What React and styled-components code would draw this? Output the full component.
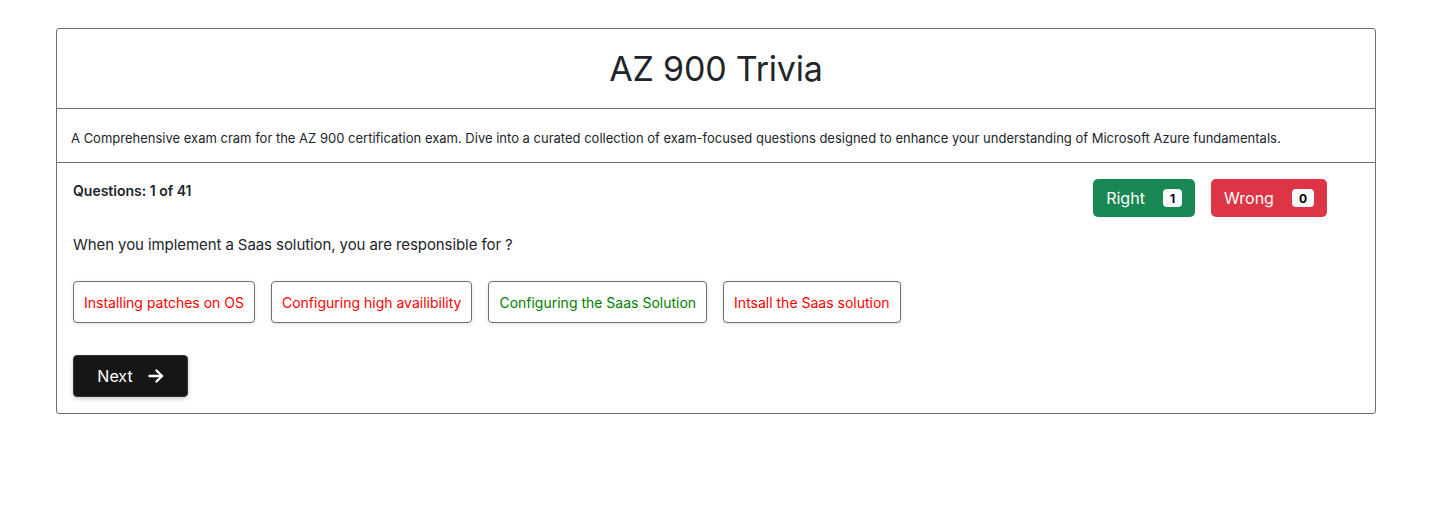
import React from "react";
import styled, { createGlobalStyle } from "styled-components";

const Global = createGlobalStyle`
  html, body { margin: 0; padding: 0; background: #fff; }
  body { font-family: Inter, "Noto Sans", sans-serif; color: #212529; }
  * { box-sizing: border-box; }
`;

const Page = styled.div`
  padding: 28px 58px 0 56px;
`;

const Card = styled.div`
  border: 1px solid #6f6f6f;
  border-radius: 3px;
`;

const Header = styled.div`
  height: 80px;
  display: flex;
  align-items: center;
  justify-content: center;
  border-bottom: 1px solid #6f6f6f;
`;

const Title = styled.h1`
  margin: 0;
  font-size: 34px;
  font-weight: 400;
  color: #212529;
  letter-spacing: -0.2px;
`;

const Description = styled.div`
  height: 54px;
  display: flex;
  align-items: center;
  padding: 4px 14px 0;
  font-size: 13px;
  color: #212529;
  border-bottom: 1px solid #6f6f6f;
`;

const Body = styled.div`
  padding: 16px 16px 16px;
`;

const TopRow = styled.div`
  display: flex;
  justify-content: space-between;
  align-items: flex-start;
  padding-right: 32px;
`;

const Counter = styled.div`
  font-size: 14px;
  font-weight: 600;
  margin-top: 3px;
`;

const Scores = styled.div`
  display: flex;
  gap: 16px;
`;

const ScoreButton = styled.div`
  height: 38px;
  display: flex;
  align-items: center;
  gap: 18px;
  padding: 0 13px;
  border-radius: 5px;
  color: #fff;
  font-size: 16px;
  background: ${(p) => p.$bg};
`;

const Badge = styled.span`
  background: #f8f9fa;
  color: #000;
  font-size: 12px;
  font-weight: 700;
  border-radius: 4px;
  padding: 0 7px;
  height: 18px;
  display: inline-flex;
  align-items: center;
  justify-content: center;
`;

const Question = styled.div`
  font-size: 15px;
  letter-spacing: -0.08px;
  margin-top: 18px;
`;

const Options = styled.div`
  display: flex;
  gap: 16px;
  margin-top: 27px;
`;

const Option = styled.button`
  height: 42px;
  padding: 0 10px;
  background: #fff;
  border: 1px solid #6f6f6f;
  border-radius: 4px;
  box-shadow: 0 1px 4px rgba(0, 0, 0, 0.12);
  font-family: Inter, "Noto Sans", sans-serif;
  font-size: 14px;
  color: ${(p) => (p.$correct ? "#008000" : "#ff0000")};
  cursor: pointer;
`;

const NextButton = styled.button`
  margin-top: 32px;
  height: 42px;
  width: 115px;
  display: flex;
  align-items: center;
  justify-content: center;
  gap: 15px;
  background: #161616;
  color: #fff;
  border: 1px solid #333;
  border-radius: 4px;
  box-shadow: 0 2px 4px rgba(0, 0, 0, 0.2);
  font-family: Inter, "Noto Sans", sans-serif;
  font-size: 16px;
  cursor: pointer;
`;

const options = [
  { text: "Installing patches on OS", correct: false },
  { text: "Configuring high availibility", correct: false },
  { text: "Configuring the Saas Solution", correct: true },
  { text: "Intsall the Saas solution", correct: false },
];

export default function App() {
  return (
    <>
      <Global />
      <Page>
        <Card>
          <Header>
            <Title>AZ 900 Trivia</Title>
          </Header>
          <Description>
            A Comprehensive exam cram for the AZ 900 certification exam. Dive into a curated collection of exam-focused questions designed to enhance your understanding of Microsoft Azure fundamentals.
          </Description>
          <Body>
            <TopRow>
              <Counter>Questions: 1 of 41</Counter>
              <Scores>
                <ScoreButton $bg="#198754">
                  Right <Badge>1</Badge>
                </ScoreButton>
                <ScoreButton $bg="#dc3545">
                  Wrong <Badge>0</Badge>
                </ScoreButton>
              </Scores>
            </TopRow>
            <Question>When you implement a Saas solution, you are responsible for ?</Question>
            <Options>
              {options.map((o) => (
                <Option key={o.text} $correct={o.correct}>{o.text}</Option>
              ))}
            </Options>
            <NextButton>
              Next
              <svg width="16" height="14" viewBox="0 0 16 14" fill="none" stroke="#fff" strokeWidth="2.4" strokeLinecap="round" strokeLinejoin="round">
                <path d="M1.5 7h12.5" />
                <path d="M8.5 1.5l5.5 5.5-5.5 5.5" />
              </svg>
            </NextButton>
          </Body>
        </Card>
      </Page>
    </>
  );
}
